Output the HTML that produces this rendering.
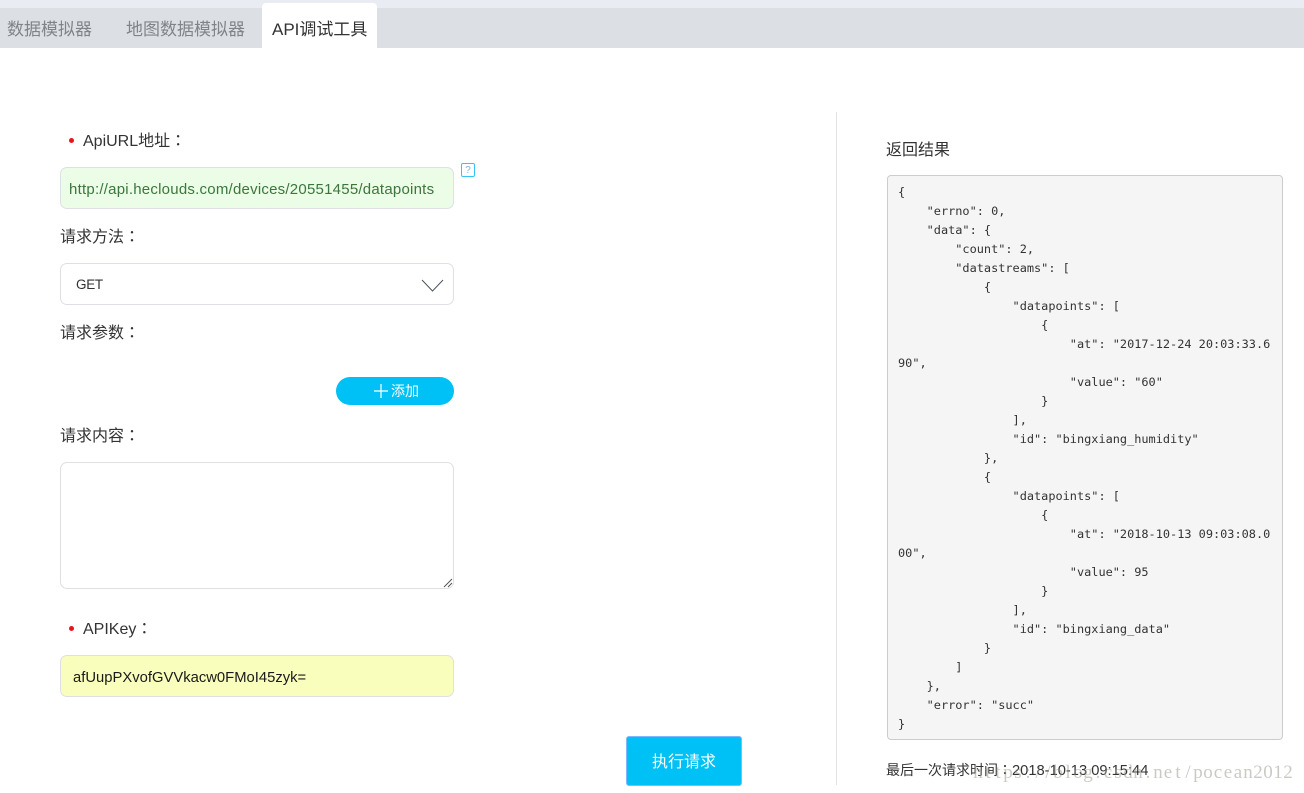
<!DOCTYPE html>
<html lang="zh"><head><meta charset="utf-8"><title>API调试工具</title>
<style>
html,body{margin:0;padding:0;background:#fff;}
body{width:1304px;height:793px;position:relative;overflow:hidden;font-family:"Liberation Sans","Noto Sans CJK SC",sans-serif;color:#333;}
.a{position:absolute;white-space:nowrap;}
.l{font-size:16px;line-height:22px;color:#333;}
.c{font-family:"Noto Sans CJK TC",sans-serif;line-height:0;}
.box{position:absolute;box-sizing:border-box;border:1px solid #dfdfe6;border-radius:7px;}
.t{font-size:17px;line-height:24px;top:18px;color:#808488;}
pre{position:absolute;margin:0;left:898px;top:183px;font:11.9px/19px "DejaVu Sans Mono","Liberation Mono",monospace;color:#333;}
.w{left:973px;top:763px;font:19px/20px "Liberation Serif",serif;color:rgba(150,150,140,.5);}
.w span{display:inline-block;width:10px;text-align:center;}
</style></head><body>
<div class="a" style="left:0;top:0;width:1304px;height:8px;background:#e9edf3"></div>
<div class="a" style="left:0;top:8px;width:1304px;height:40px;background:#dce0e4"></div>
<div class="a" style="left:262px;top:3px;width:115px;height:45px;background:#fff;border-radius:4px 4px 0 0"></div>
<div class="a t" style="left:7px">数据模拟器</div>
<div class="a t" style="left:126px">地图数据模拟器</div>
<div class="a t" style="left:272px;color:#333">API调试工具</div>

<div class="a" style="left:836px;top:112px;width:1px;height:673px;background:#e2e2e2"></div>

<div class="a" style="left:69px;top:138px;width:5px;height:5px;border-radius:50%;background:#e8141c"></div>
<div class="a l" style="left:83px;top:131px">ApiURL地址<span class="c" lang="zh-TW">：</span></div>
<div class="box" style="left:60px;top:167px;width:394px;height:42px;background:#ebfde6"></div>
<div class="a" style="left:69px;top:179px;font-size:15px;letter-spacing:.23px;line-height:22px;color:#3c763d">http://api.heclouds.com/devices/20551455/datapoints</div>
<div class="a" style="left:461px;top:163px;width:12px;height:12px;border:1px solid #35c5f5;border-radius:2px;font-size:10px;line-height:13px;text-align:center;color:#7fb4d6">?</div>

<div class="a l" style="left:60px;top:227px">请求方法<span class="c" lang="zh-TW">：</span></div>
<div class="box" style="left:60px;top:263px;width:394px;height:42px;background:#fff"></div>
<div class="a" style="left:76px;top:274px;font-size:13.5px;letter-spacing:-.3px;line-height:22px;color:#333">GET</div>
<svg class="a" style="left:420px;top:277px" width="26" height="18" viewBox="0 0 26 18"><path d="M2 3 L12.5 14 L23 3" fill="none" stroke="#4a5560" stroke-width="1"/></svg>

<div class="a l" style="left:60px;top:323px">请求参数<span class="c" lang="zh-TW">：</span></div>
<div class="a" style="left:336px;top:377px;width:118px;height:28px;border-radius:14px;background:#00c1f5"></div>
<svg class="a" style="left:374px;top:384px" width="14" height="14" viewBox="0 0 14 14"><path d="M0 7H14M7 0V14" stroke="#fff" stroke-width="1.2" fill="none"/></svg>
<div class="a" style="left:391px;top:381px;font-size:14px;line-height:20px;color:#fff">添加</div>

<div class="a l" style="left:60px;top:426px">请求内容<span class="c" lang="zh-TW">：</span></div>
<div class="box" style="left:60px;top:462px;width:394px;height:127px;background:#fff"></div>
<svg class="a" style="left:443px;top:578px" width="10" height="10" viewBox="0 0 10 10"><path d="M1 9L9 1M5 9L9 5" stroke="#555" stroke-width="1" fill="none"/></svg>

<div class="a" style="left:69px;top:626px;width:5px;height:5px;border-radius:50%;background:#e8141c"></div>
<div class="a l" style="left:83px;top:619px">APIKey<span class="c" lang="zh-TW">：</span></div>
<div class="box" style="left:60px;top:655px;width:394px;height:42px;background:#fafebc"></div>
<div class="a" style="left:73px;top:667px;font-size:14.8px;line-height:22px;color:#1a1a1a">afUupPXvofGVVkacw0FMoI45zyk=</div>

<div class="a" style="left:626px;top:736px;box-sizing:border-box;width:116px;height:50px;background:#00c1f5;border:1px solid #7cb9ff;border-radius:3px;color:#fff;font-size:16px;line-height:51px;text-align:center">执行请求</div>

<div class="a l" style="left:886px;top:140px">返回结果</div>
<div class="a" style="left:887px;top:175px;box-sizing:border-box;width:396px;height:565px;background:#f5f5f5;border:1px solid #ccc;border-radius:4px"></div>
<pre>{
    "errno": 0,
    "data": {
        "count": 2,
        "datastreams": [
            {
                "datapoints": [
                    {
                        "at": "2017-12-24 20:03:33.6
90",
                        "value": "60"
                    }
                ],
                "id": "bingxiang_humidity"
            },
            {
                "datapoints": [
                    {
                        "at": "2018-10-13 09:03:08.0
00",
                        "value": 95
                    }
                ],
                "id": "bingxiang_data"
            }
        ]
    },
    "error": "succ"
}</pre>
<div class="a" style="left:886px;top:760px;font-size:14px;line-height:20px;color:#333">最后一次请求时间<span class="c" lang="zh-TW">：</span><span style="font-size:14.7px">2018-10-13 09:15:44</span></div>
<div class="a w"><span>h</span><span>t</span><span>t</span><span>p</span><span>s</span><span>:</span><span>/</span><span>/</span><span>b</span><span>l</span><span>o</span><span>g</span><span>.</span><span>c</span><span>s</span><span>d</span><span>n</span><span>.</span><span>n</span><span>e</span><span>t</span><span>/</span><span>p</span><span>o</span><span>c</span><span>e</span><span>a</span><span>n</span><span>2</span><span>0</span><span>1</span><span>2</span></div>
</body></html>
